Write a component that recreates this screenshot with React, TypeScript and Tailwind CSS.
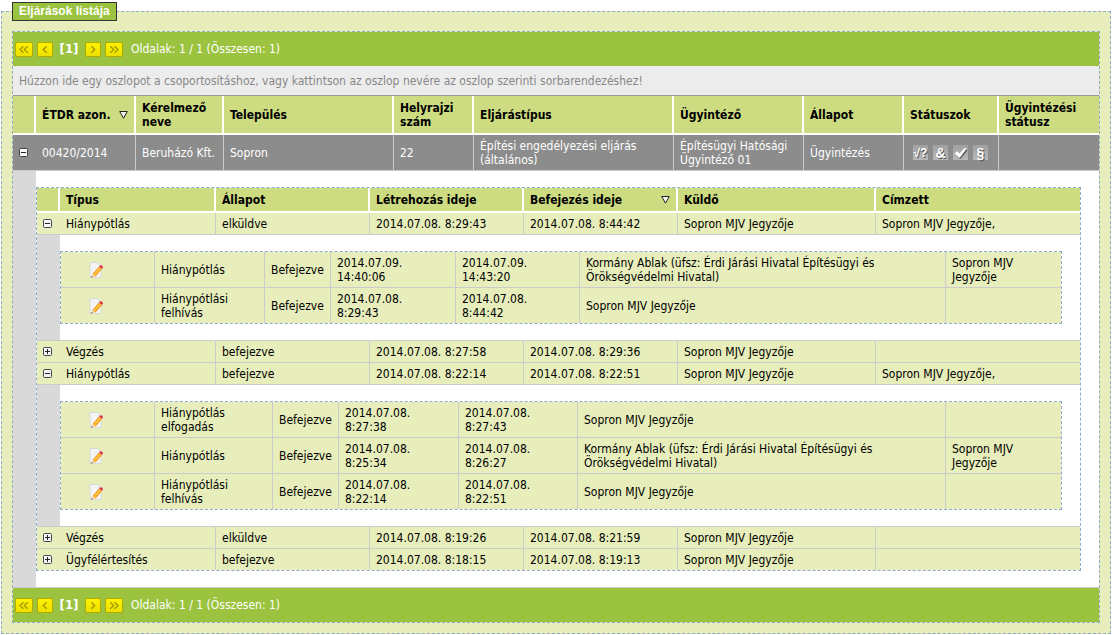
import { Fragment, useState } from "react";
import type { ReactNode } from "react";

type Step = {
  type: string;
  state: string;
  created: string;
  finished: string;
  sender: string;
  recipient: string;
};

type Task = Step & { cols?: string[]; steps?: Step[] };

const AUTHORITY = "Sopron MJV Jegyzője";
const OFFICE = "Kormány Ablak (üfsz: Érdi Járási Hivatal Építésügyi és Örökségvédelmi Hivatal)";

const MAIN_COLS = ["w-[23px]", "w-[100px]", "w-[88px]", "w-[170px]", "w-[80px]", "w-[200px]", "w-[130px]", "w-[100px]", "w-[95px]", "w-[100px]"];
const TASK_COLS = ["w-[23px]", "w-[156px]", "w-[154px]", "w-[154px]", "w-[154px]", "w-[198px]", "w-[204px]"];

const tasks: Task[] = [
  {
    type: "Hiánypótlás", state: "elküldve", created: "2014.07.08. 8:29:43", finished: "2014.07.08. 8:44:42", sender: AUTHORITY, recipient: AUTHORITY + ",",
    cols: ["w-[94px]", "w-[110px]", "w-[66px]", "w-[125px]", "w-[124px]", "w-[366px]", "w-[115px]"],
    steps: [
      { type: "Hiánypótlás", state: "Befejezve", created: "2014.07.09. 14:40:06", finished: "2014.07.09. 14:43:20", sender: OFFICE, recipient: AUTHORITY },
      { type: "Hiánypótlási felhívás", state: "Befejezve", created: "2014.07.08. 8:29:43", finished: "2014.07.08. 8:44:42", sender: AUTHORITY, recipient: "" },
    ],
  },
  { type: "Végzés", state: "befejezve", created: "2014.07.08. 8:27:58", finished: "2014.07.08. 8:29:36", sender: AUTHORITY, recipient: "" },
  {
    type: "Hiánypótlás", state: "befejezve", created: "2014.07.08. 8:22:14", finished: "2014.07.08. 8:22:51", sender: AUTHORITY, recipient: AUTHORITY + ",",
    cols: ["w-[94px]", "w-[118px]", "w-[66px]", "w-[120px]", "w-[119px]", "w-[368px]", "w-[115px]"],
    steps: [
      { type: "Hiánypótlás elfogadás", state: "Befejezve", created: "2014.07.08. 8:27:38", finished: "2014.07.08. 8:27:43", sender: AUTHORITY, recipient: "" },
      { type: "Hiánypótlás", state: "Befejezve", created: "2014.07.08. 8:25:34", finished: "2014.07.08. 8:26:27", sender: OFFICE, recipient: AUTHORITY },
      { type: "Hiánypótlási felhívás", state: "Befejezve", created: "2014.07.08. 8:22:14", finished: "2014.07.08. 8:22:51", sender: AUTHORITY, recipient: "" },
    ],
  },
  { type: "Végzés", state: "elküldve", created: "2014.07.08. 8:19:26", finished: "2014.07.08. 8:21:59", sender: AUTHORITY, recipient: "" },
  { type: "Ügyfélértesítés", state: "befejezve", created: "2014.07.08. 8:18:15", finished: "2014.07.08. 8:19:13", sender: AUTHORITY, recipient: "" },
];

function Cols({ widths }: { widths: string[] }) {
  return (
    <colgroup>
      {widths.map((w, i) => (
        <col key={i} className={w} />
      ))}
    </colgroup>
  );
}

function PagerButton({ label, d, wide }: { label: string; d: string; wide?: boolean }) {
  return (
    <button
      type="button"
      aria-label={label}
      className={`flex h-[15px] items-center justify-center rounded-[2px] border border-[#b3ab00] bg-linear-to-b from-[#fff200] to-[#ebe000] ${wide ? "w-[18px]" : "w-4"}`}
    >
      <svg width={wide ? 10 : 6} height="7" viewBox={wide ? "0 0 10 7" : "0 0 6 7"} fill="none" stroke="#a39b00" strokeWidth="1.4">
        <path d={d} />
      </svg>
    </button>
  );
}

function Pager() {
  return (
    <nav aria-label="Lapozás" className="flex h-[34px] items-center bg-[#9bc340] pl-0.5 text-white">
      <div className="flex items-center gap-1">
        <PagerButton wide label="Első oldal" d="M4.500 .2 1 3.500l3.500 3.300M8.800 .2l-3.500 3.300 3.500 3.300" />
        <PagerButton label="Előző oldal" d="M4.800 .2 1.300 3.500l3.500 3.300" />
      </div>
      <span className="w-8 text-center text-[13px] font-bold">[1]</span>
      <div className="flex items-center gap-1">
        <PagerButton label="Következő oldal" d="M1.200 .2l3.500 3.300-3.500 3.300" />
        <PagerButton wide label="Utolsó oldal" d="M1.200 .2l3.500 3.300-3.500 3.300M5.500 .2l3.500 3.300-3.500 3.300" />
      </div>
      <span className="ml-2">Oldalak: 1 / 1 (Összesen: 1)</span>
    </nav>
  );
}

function Toggle({ open, onClick }: { open: boolean; onClick?: () => void }) {
  return (
    <button type="button" aria-label={open ? "Bezárás" : "Kinyitás"} aria-expanded={open} onClick={onClick} className="block">
      <svg width="9" height="9" viewBox="0 0 9 9">
        <rect x=".5" y=".5" width="8" height="8" rx="1" fill="#f6f6fa" stroke="#444" />
        <path d="M2 4h5v1H2z" fill="#222" />
        {!open && <path d="M4 2h1v5H4z" fill="#222" />}
      </svg>
    </button>
  );
}

function Head({ children, sorted, last }: { children: ReactNode; sorted?: boolean; last?: boolean }) {
  return (
    <th scope="col" className={`border-b-2 border-white px-1.5 text-left font-bold ${last ? "" : "border-r-2"}`}>
      <button type="button" className="flex w-full items-center justify-between text-left">
        {children}
        {sorted && (
          <svg width="9" height="8" viewBox="0 0 9 8" className="shrink-0">
            <path d="M.7 .5h7.600L4.500 7.200z" fill="#f4f4f4" stroke="#222" />
          </svg>
        )}
      </button>
    </th>
  );
}

function EditIcon() {
  return (
    <svg width="14" height="16" viewBox="0 0 14 16" className="block">
      <path d="M1 .5h8l3 3v12H1z" fill="#f3f4f4" stroke="#d0d4d2" strokeWidth=".8" />
      <path d="M9 .5v3h3z" fill="#dfe3e3" />
      <path d="M10 4.500l3 2.500-6.500 7.500-3-2.500z" fill="#f79a1a" />
      <path d="M10.800 5.200l1.200 1-6.500 7.500-1.200-1z" fill="#ffc845" />
      <path d="M10 4.500l.9-1q1.200-.8 2.400.3 1.100 1.200.3 2.300L13 7z" fill="#e0344a" />
      <path d="M3.500 12l3 2.500-4.500 1z" fill="#f3d5a2" />
      <path d="M2.600 13.900l1.100 1-1.700.5z" fill="#444" />
    </svg>
  );
}

function StatusIcon({ label, children }: { label: string; children: ReactNode }) {
  return (
    <span
      role="img"
      aria-label={label}
      className="flex size-[15px] items-center justify-center bg-linear-to-b from-[#a0a0a0] to-[#b8b8b8] font-['Liberation_Sans',sans-serif] text-[14px] leading-none font-bold text-white [text-shadow:1px_1px_0_#555]"
    >
      {children}
    </span>
  );
}

function Steps({ steps, cols }: { steps: Step[]; cols: string[] }) {
  return (
    <div className="border border-dashed border-[#8eabc9]">
      <table className="w-full table-fixed border-separate border-spacing-0 bg-[#e7eebb]">
        <Cols widths={cols} />
        <tbody>
          {steps.map((s, i) => {
            const line = i < steps.length - 1 ? "h-9 border-b border-[#cbcbcb]" : "h-[35px] border-[#cbcbcb]";
            const cell = `border-r px-1.5 ${line}`;
            return (
              <tr key={i}>
                <td className={cell}>
                  <button type="button" aria-label="Szerkesztés" className="mx-auto block pr-6">
                    <EditIcon />
                  </button>
                </td>
                <td className={cell}>{s.type}</td>
                <td className={`${cell} whitespace-nowrap`}>{s.state}</td>
                <td className={`${cell} pr-10`}>{s.created}</td>
                <td className={`${cell} pr-10`}>{s.finished}</td>
                <td className={`${cell} pr-14`}>{s.sender}</td>
                <td className={`pr-8 pl-1.5 ${line}`}>{s.recipient}</td>
              </tr>
            );
          })}
        </tbody>
      </table>
    </div>
  );
}

function Tasks() {
  const [open, setOpen] = useState([true, false, true, false, false]);
  const toggle = (i: number) => setOpen(open.map((o, n) => (n === i ? !o : o)));
  return (
    <div className="border border-dashed border-[#8eabc9]">
      <table className="w-full table-fixed border-separate border-spacing-0 bg-[#e7eebb]">
        <Cols widths={TASK_COLS} />
        <thead className="bg-[#cddb81]">
          <tr className="h-[25px]">
            <td className="border-r-2 border-b-2 border-white" />
            <Head>Típus</Head>
            <Head>Állapot</Head>
            <Head>Létrehozás ideje</Head>
            <Head sorted>Befejezés ideje</Head>
            <Head>Küldő</Head>
            <Head last>Címzett</Head>
          </tr>
        </thead>
        <tbody>
          {tasks.map((t, i) => {
            const line = i < tasks.length - 1 ? "h-[22px] border-b border-[#cbcbcb]" : "h-[21px] border-[#cbcbcb]";
            const cell = `border-r px-1.5 ${line}`;
            return (
              <Fragment key={i}>
                <tr>
                  <td className={`pl-1.5 ${line}`}>
                    <Toggle open={open[i]} onClick={() => toggle(i)} />
                  </td>
                  <td className={cell}>{t.type}</td>
                  <td className={cell}>{t.state}</td>
                  <td className={cell}>{t.created}</td>
                  <td className={cell}>{t.finished}</td>
                  <td className={cell}>{t.sender}</td>
                  <td className={`px-1.5 ${line}`}>{t.recipient}</td>
                </tr>
                {open[i] && t.steps && t.cols && (
                  <tr>
                    <td className="border-b border-[#cbcbcb] bg-[#d9d9d9]" />
                    <td colSpan={6} className="border-b border-[#cbcbcb] bg-white py-4 pr-[18px]">
                      <Steps steps={t.steps} cols={t.cols} />
                    </td>
                  </tr>
                )}
              </Fragment>
            );
          })}
        </tbody>
      </table>
    </div>
  );
}

export default function App() {
  const [open, setOpen] = useState(true);
  const cell = "border-r border-b border-[#cbcbcb] px-1.5";
  return (
    <main className="bg-white px-px pt-0.5 font-['DejaVu_Sans_Condensed','DejaVu_Sans',sans-serif] text-[12px] leading-[14px] text-black">
      <fieldset className="border border-dashed border-[#8eabc9] bg-[#e7eebb] p-2.5">
        <legend className="h-[19px] border border-[#333] bg-[#9bc340] px-1.5 font-['Liberation_Sans',sans-serif] leading-[17px] font-bold text-white">
          Eljárások listája
        </legend>
        <div className="border border-dashed border-[#8eabc9] bg-white bg-clip-padding">
          <Pager />
          <div className="flex h-[30px] items-center border-b border-[#999] bg-[#ececec] px-1.5 text-[#888]">
            Húzzon ide egy oszlopot a csoportosításhoz, vagy kattintson az oszlop nevére az oszlop szerinti sorbarendezéshez!
          </div>
          <table className="w-full table-fixed border-separate border-spacing-0">
            <Cols widths={MAIN_COLS} />
            <thead className="bg-[#cddb81]">
              <tr className="h-[39px]">
                <td className="border-r-2 border-b-2 border-white" />
                <Head sorted>ÉTDR azon.</Head>
                <Head>Kérelmező neve</Head>
                <Head>Település</Head>
                <Head>Helyrajzi szám</Head>
                <Head>Eljárástípus</Head>
                <Head>Ügyintéző</Head>
                <Head>Állapot</Head>
                <Head>Státuszok</Head>
                <Head last>Ügyintézési státusz</Head>
              </tr>
            </thead>
            <tbody>
              <tr className="h-9 bg-[#8c8c8c] text-white">
                <td className="border-b border-[#cbcbcb] pl-1.5">
                  <Toggle open={open} onClick={() => setOpen(!open)} />
                </td>
                <td className={cell}>00420/2014</td>
                <td className={`${cell} whitespace-nowrap`}>Beruházó Kft.</td>
                <td className={cell}>Sopron</td>
                <td className={cell}>22</td>
                <td className={cell}>Építési engedélyezési eljárás (általános)</td>
                <td className={cell}>Építésügyi Hatósági Ügyintéző 01</td>
                <td className={cell}>Ügyintézés</td>
                <td className={cell}>
                  <div className="flex gap-[5px] pl-[3px]">
                    <StatusIcon label="Ellenőrzés">
                      <span className="text-[12px]">√?</span>
                    </StatusIcon>
                    <StatusIcon label="Csatolt">&amp;</StatusIcon>
                    <StatusIcon label="Elfogadva">
                      <svg width="13" height="12" viewBox="0 0 13 12">
                        <path d="M3 7.500l3 3.500 7-8.500" fill="none" stroke="#555" strokeWidth="1.800" />
                        <path d="M1 6.500l2.200-2L5.500 7l4.800-5.500h2.200L5.500 10.800z" fill="#fff" stroke="#fff" strokeWidth=".5" />
                      </svg>
                    </StatusIcon>
                    <StatusIcon label="Jogszabály">§</StatusIcon>
                  </div>
                </td>
                <td className="border-b border-[#cbcbcb]" />
              </tr>
              {open && (
                <tr>
                  <td className="border-b border-[#cbcbcb] bg-[#d9d9d9]" />
                  <td colSpan={9} className="border-b border-[#cbcbcb] bg-white py-4 pr-[18px]">
                    <Tasks />
                  </td>
                </tr>
              )}
            </tbody>
          </table>
          <Pager />
        </div>
      </fieldset>
    </main>
  );
}
